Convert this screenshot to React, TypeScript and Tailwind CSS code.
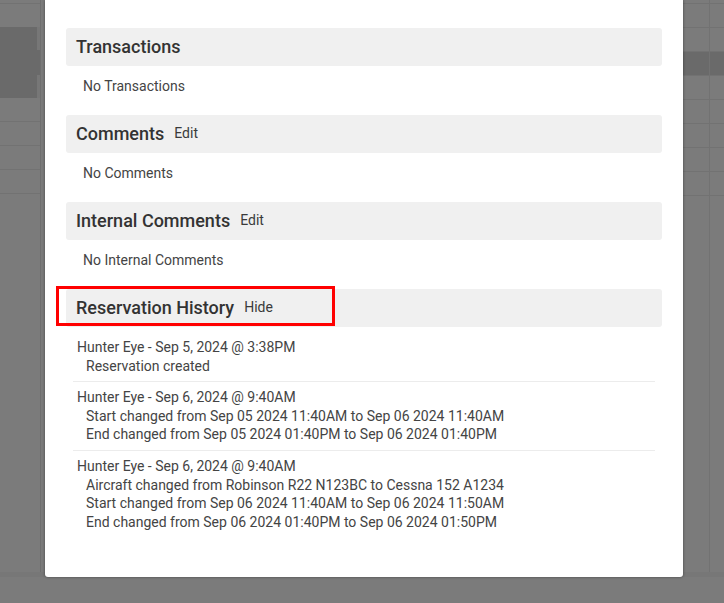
import React from "react";

type Entry = { who: string; lines: string[] };

const history: Entry[] = [
  { who: "Hunter Eye - Sep 5, 2024 @ 3:38PM", lines: ["Reservation created"] },
  {
    who: "Hunter Eye - Sep 6, 2024 @ 9:40AM",
    lines: [
      "Start changed from Sep 05 2024 11:40AM to Sep 06 2024 11:40AM",
      "End changed from Sep 05 2024 01:40PM to Sep 06 2024 01:40PM",
    ],
  },
  {
    who: "Hunter Eye - Sep 6, 2024 @ 9:40AM",
    lines: [
      "Aircraft changed from Robinson R22 N123BC to Cessna 152 A1234",
      "Start changed from Sep 06 2024 11:40AM to Sep 06 2024 11:50AM",
      "End changed from Sep 06 2024 01:40PM to Sep 06 2024 01:50PM",
    ],
  },
];

function SectionHeader({ title, action }: { title: string; action?: string }) {
  return (
    <div className="flex h-[38px] items-center gap-[10px] rounded-[3px] bg-[#f0f0f0] px-[10px] pb-[2px]">
      <h3 className="text-[18px] font-medium text-[#333]">{title}</h3>
      {action && <span className="text-[14px] text-[#3a3a3a]">{action}</span>}
    </div>
  );
}

function Section({ title, action, empty }: { title: string; action?: string; empty: string }) {
  return (
    <section className="mb-[19px]">
      <SectionHeader title={title} action={action} />
      <p className="mt-[10px] pl-[17px] text-[14px] leading-[20px] text-[#444]">{empty}</p>
    </section>
  );
}

function BgRow({ dark }: { dark?: boolean }) {
  return <div className={`h-[24px] border-b border-[#727272] ${dark ? "bg-[#6a6a6a]" : ""}`} />;
}

export default function App() {
  return (
    <div className="relative h-[603px] w-[724px] overflow-hidden bg-[#7b7b7b]" style={{ fontFamily: "Roboto, 'Liberation Sans', sans-serif" }}>
      {/* dimmed page behind the modal */}
      <div className="flex h-[572px]">
        <div className="w-[41px] border-r border-[#6f6f6f]">
          <div className="h-[4px] border-b border-[#727272]" />
          <div className="h-[23px]" />
          <div className="flex h-[71px] justify-end bg-[#6a6a6a]">
            <div className="flex w-[3px] flex-col justify-between">
              <div className="h-[23px] bg-[#777]" />
              <div className="h-[23px] bg-[#777]" />
            </div>
          </div>
          <div className="h-[24px] border-b border-[#727272]" />
          <BgRow />
          <BgRow />
          <BgRow />
        </div>
        <div className="flex-1" />
        <div className="flex w-[41px]">
          <div className="w-[27px] border-r border-[#727272]">
            <div className="h-[4px] border-b border-[#727272]" />
            <BgRow />
            <BgRow />
            <BgRow dark />
            <BgRow />
            <BgRow />
            <BgRow />
            <BgRow />
            <BgRow />
          </div>
          <div className="flex-1">
            <div className="h-[4px] border-b border-[#727272]" />
            <BgRow />
            <BgRow />
            <BgRow dark />
            <BgRow />
            <BgRow />
            <BgRow />
            <BgRow />
            <BgRow />
          </div>
        </div>
      </div>
      <div className="h-[5px] bg-[#777]" />

      {/* modal */}
      <div className="absolute left-[45px] top-0 h-[577px] w-[638px] rounded-b-[3px] bg-white px-[21px] pt-[28px] shadow-[0_0_3px_rgba(0,0,0,0.45)]">
        <Section title="Transactions" empty="No Transactions" />
        <Section title="Comments" action="Edit" empty="No Comments" />
        <Section title="Internal Comments" action="Edit" empty="No Internal Comments" />
        <section className="relative">
          <SectionHeader title="Reservation History" action="Hide" />
          <div className="pointer-events-none absolute left-[-10px] top-[-3px] h-[40px] w-[279px] border-[3px] border-[#ff0000]" />
          <div className="mx-[7px] mt-[5px]">
            {history.map((e, i) => (
              <div key={i} className={`px-[4px] py-[6px] text-[14px] leading-[18.6px] text-[#444] ${i < history.length - 1 ? "border-b border-[#ececec]" : ""}`}>
                <p>{e.who}</p>
                {e.lines.map((l) => (
                  <p key={l} className="pl-[9px]">{l}</p>
                ))}
              </div>
            ))}
          </div>
        </section>
      </div>
    </div>
  );
}
